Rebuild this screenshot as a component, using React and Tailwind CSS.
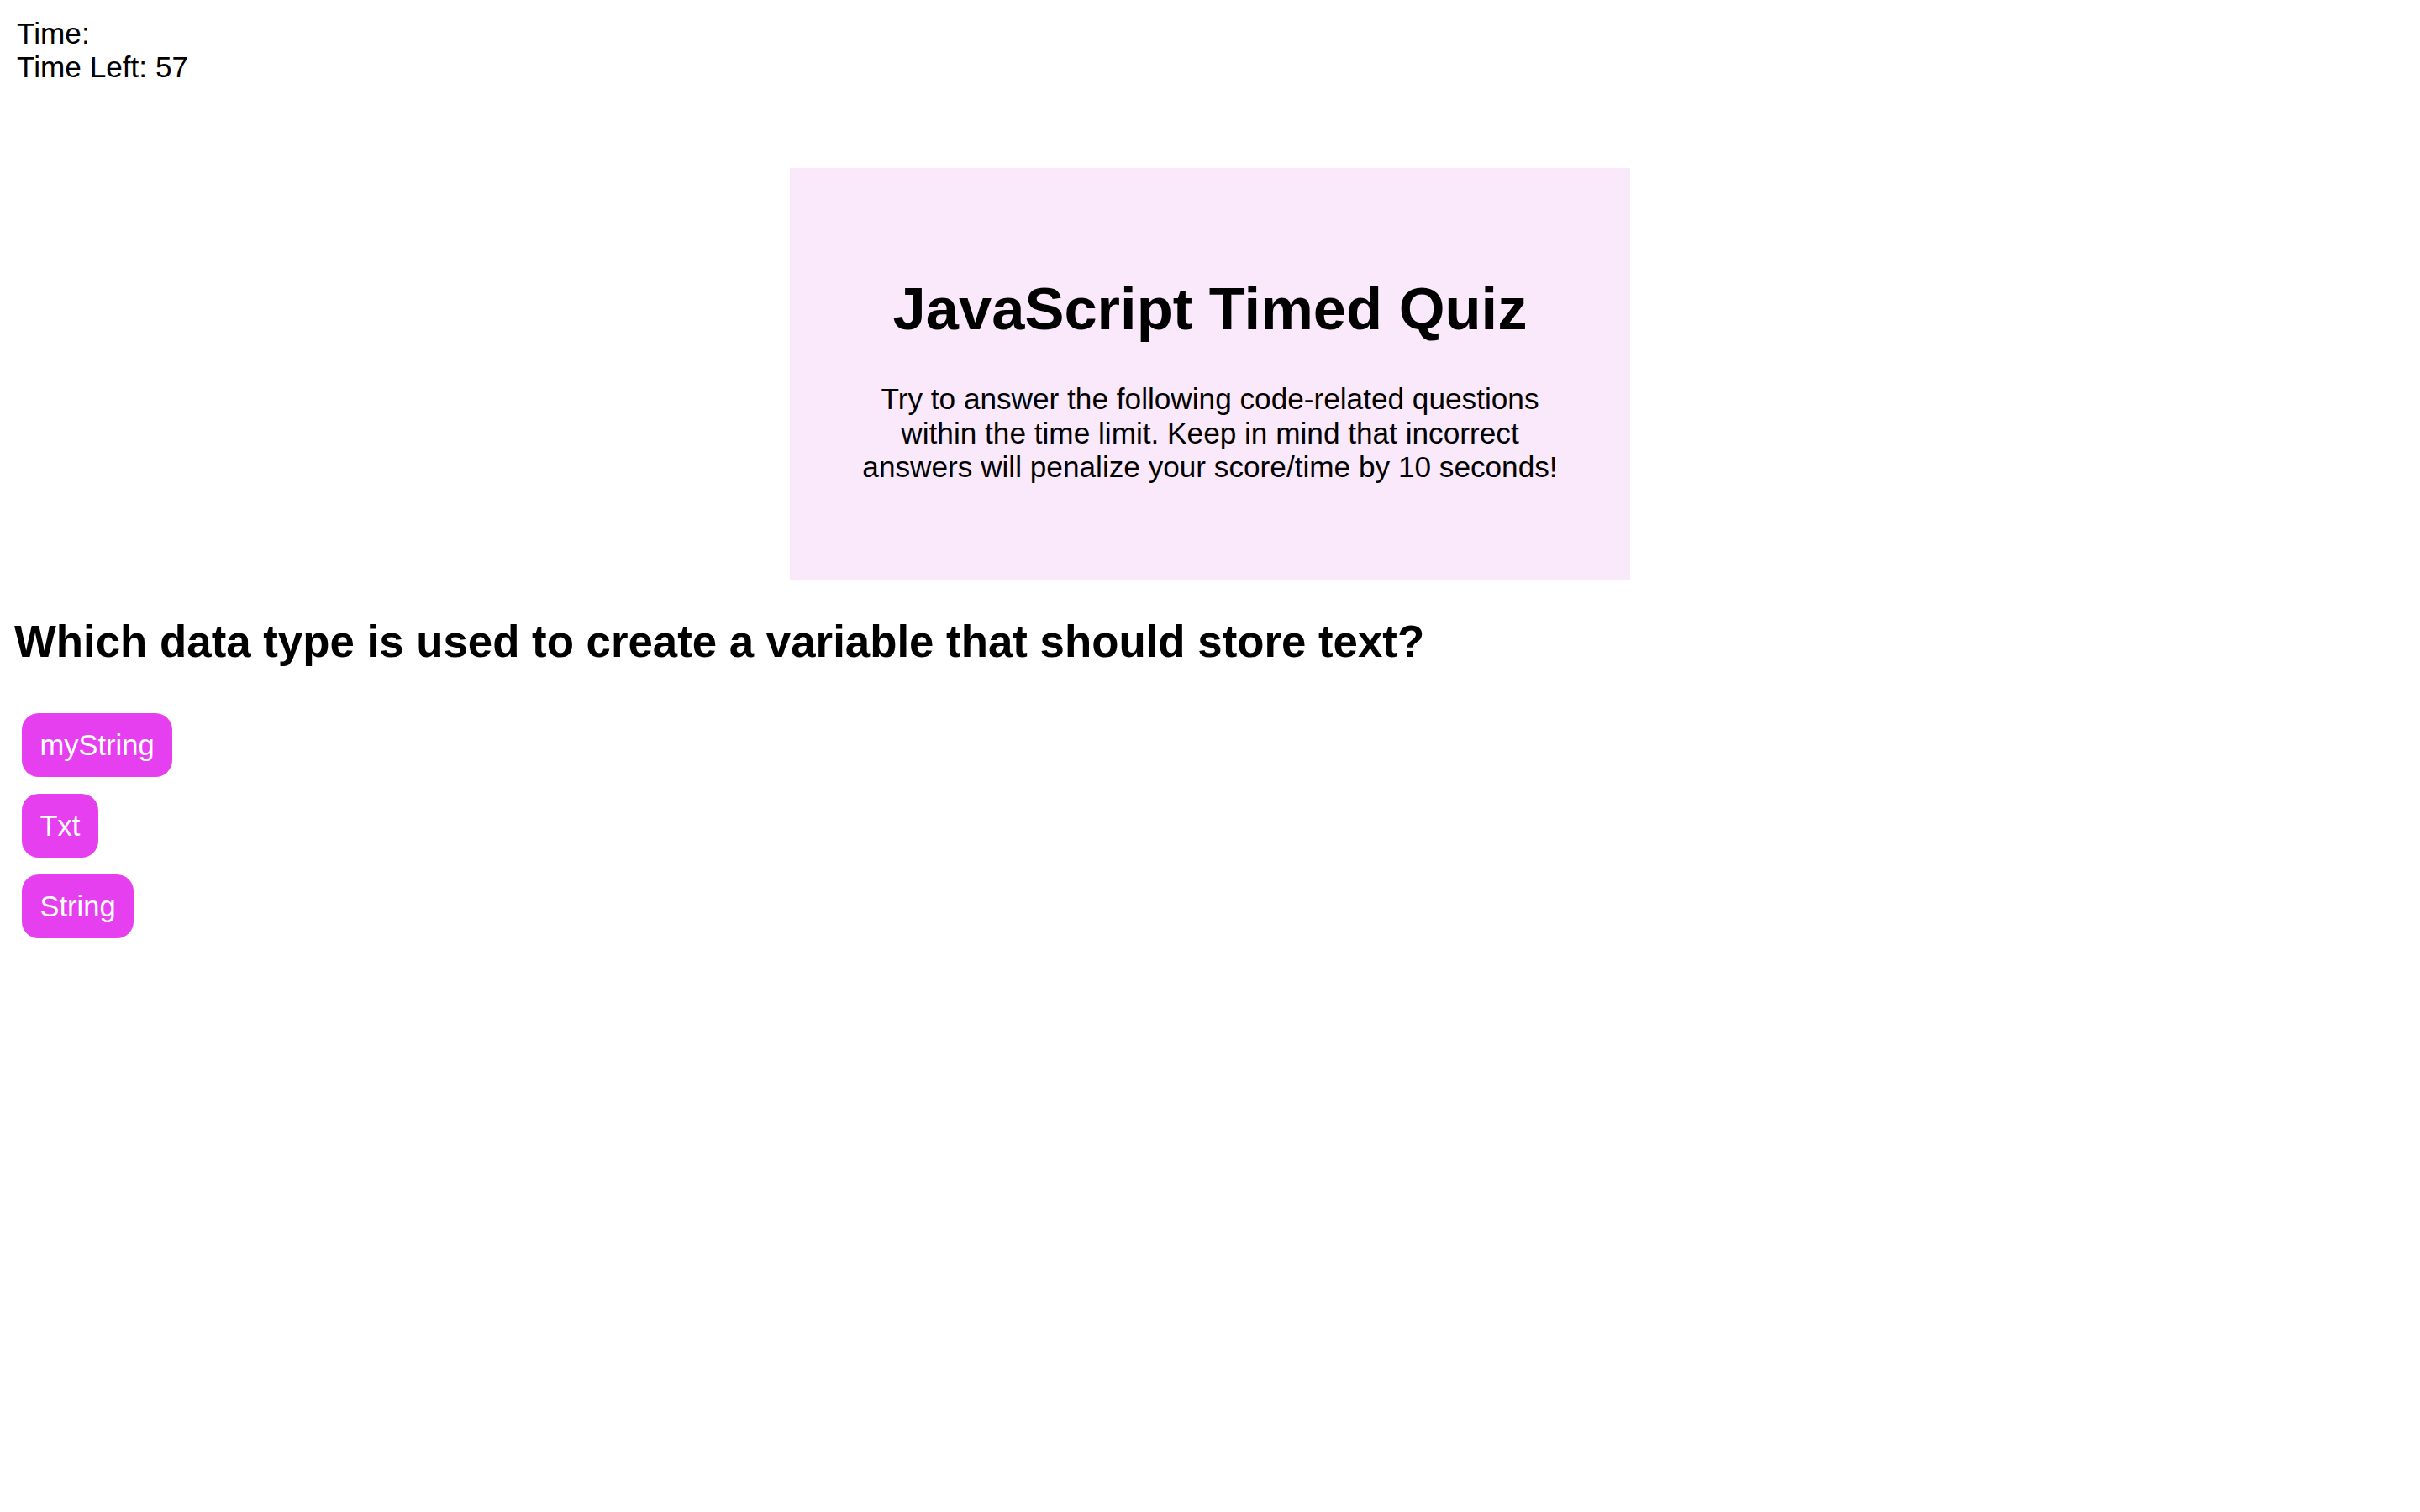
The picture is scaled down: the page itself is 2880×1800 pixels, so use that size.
import React from "react";

export default function App() {
  const answers = ["myString", "Txt", "String"];
  return (
    <div className="min-h-screen bg-white p-5 font-['Liberation_Sans',Arial,sans-serif] text-black">
      <div className="text-[35.2px] leading-[40px]">
        <div>Time:</div>
        <div>Time Left: 57</div>
      </div>

      <section className="mx-auto mt-[100px] w-[1000px] bg-[#fae8fb] px-[80px] py-[80px] text-center">
        <h1 className="mt-[47px] text-[70.5px] font-bold leading-[81px]">JavaScript Timed Quiz</h1>
        <p className="mt-[47px] mb-[33px] text-[35.2px] leading-[40.5px]">
          Try to answer the following code-related questions within the time limit. Keep in mind that
          incorrect answers will penalize your score/time by 10 seconds!
        </p>
      </section>

      <h2 className="-ml-[3px] mt-[44px] text-[52.8px] font-bold leading-[60px]">
        Which data type is used to create a variable that should store text?
      </h2>

      <div className="mt-[55px] flex flex-col items-start gap-5 pl-[6px]">
        {answers.map((a) => (
          <button
            key={a}
            className="rounded-[20px] bg-[#e63ff0] px-[21.5px] py-[18px] text-[34.5px] leading-[40px] text-white"
          >
            {a}
          </button>
        ))}
      </div>
    </div>
  );
}
